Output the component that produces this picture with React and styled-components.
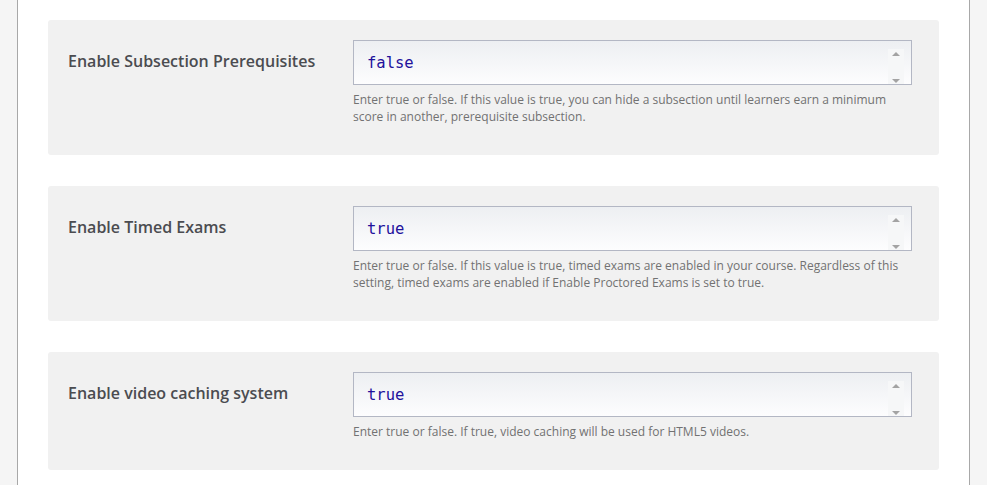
import styled, { createGlobalStyle } from 'styled-components';

const GlobalStyle = createGlobalStyle`
    body {
        margin: 0;
        background: #f5f5f5;
        font-family: "Open Sans", "Liberation Sans", sans-serif;
    }
`

const Page = styled.div`
    display: flex;
    padding: 0 17px;
    height: 485px;
    overflow: hidden;
`

const Panel = styled.div`
    flex: 1;
    background: #fff;
    border-left: 1px solid #a8a8a8;
    border-right: 1px solid #a8a8a8;
    padding: 20px 30px 0 30px;
    display: flex;
    flex-direction: column;
    gap: 31px;
`

const Setting = styled.div`
    display: grid;
    grid-template-columns: 285px 559px;
    background: #f1f1f1;
    border-radius: 3px;
    padding: 20px 20px 30px;
`

const Label = styled.label`
    font-size: 16px;
    font-weight: 600;
    color: #4b4c50;
    padding-top: 9px;
    line-height: 24px;
`

const Field = styled.div`
    display: flex;
    flex-direction: column;
`

const Editor = styled.div`
    position: relative;
    height: 45px;
    box-sizing: border-box;
    border: 1px solid #b3b7c4;
    background: linear-gradient(#edeff2, #fdfdfe);
    display: flex;
    align-items: center;
    padding-left: 13px;
`

const Value = styled.span`
    font-family: "DejaVu Sans Mono", monospace;
    font-size: 15.5px;
    color: #22119c;
    padding-top: 1px;
`

const Scrollbar = styled.div`
    position: absolute;
    top: 8px;
    right: 7px;
    bottom: 0;
    width: 16px;
    background: #f6f7f8;
    display: flex;
    flex-direction: column;
    justify-content: space-between;
    align-items: center;
    padding: 3px 0 1px;
    box-sizing: border-box;
`

const Arrow = styled.span`
    width: 0;
    height: 0;
    border-left: 4px solid transparent;
    border-right: 4px solid transparent;
    ${p => p.$down
        ? 'border-top: 4px solid #a3a3a3;'
        : 'border-bottom: 4px solid #a3a3a3;'}
`

const Help = styled.p`
    margin: 6px 0 0;
    font-size: 12px;
    line-height: 17px;
    color: #727272;
`

const settings = [
    {
        label: 'Enable Subsection Prerequisites',
        value: 'false',
        help: 'Enter true or false. If this value is true, you can hide a subsection until learners earn a minimum score in another, prerequisite subsection.',
    },
    {
        label: 'Enable Timed Exams',
        value: 'true',
        help: 'Enter true or false. If this value is true, timed exams are enabled in your course. Regardless of this setting, timed exams are enabled if Enable Proctored Exams is set to true.',
    },
    {
        label: 'Enable video caching system',
        value: 'true',
        help: 'Enter true or false. If true, video caching will be used for HTML5 videos.',
    },
]

function App () {
    return (
        <>
            <GlobalStyle />
            <Page>
                <Panel>
                    {settings.map(s => (
                        <Setting key={s.label}>
                            <Label>{s.label}</Label>
                            <Field>
                                <Editor>
                                    <Value>{s.value}</Value>
                                    <Scrollbar>
                                        <Arrow />
                                        <Arrow $down />
                                    </Scrollbar>
                                </Editor>
                                <Help>{s.help}</Help>
                            </Field>
                        </Setting>
                    ))}
                </Panel>
            </Page>
        </>
    )
}

export default App;
